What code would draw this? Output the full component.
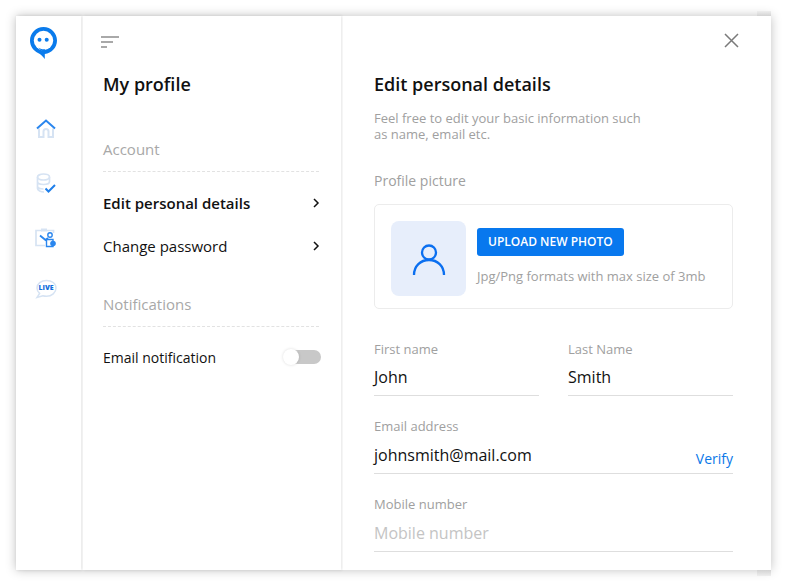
<script lang="ts">
</script>

<div class="page">
  <div class="card">
    <nav class="rail">
      <svg class="logo" width="28" height="32" viewBox="0 0 28 32">
        <path fill="#0a7bec" d="M13.500 0C6 0 0 6 0 13.500c0 5.500 3.300 10.300 8 12.400 2.600 1.200 5 3.500 6.800 6.100V27c6.800-.7 12.200-6.500 12.200-13.500C27 6 21 0 13.500 0z"/>
        <circle cx="13.500" cy="13.500" r="9.700" fill="#fff"/>
        <path d="M6 19c2.400 3.400 5.400 4.700 9 5v-3.500c-3.500.8-6.400 0-9-1.500z" fill="#fff"/>
        <path d="M8 20.500c2 1.400 4.500 2 7 1.700v2.300c-3-.2-5.200-1.600-7-4z" fill="#0a7bec"/>
        <circle cx="9.500" cy="12.800" r="2" fill="#0a7bec"/>
        <circle cx="16.700" cy="12.800" r="2" fill="#0a7bec"/>
      </svg>
      <div class="rail-icons">
        <svg width="20" height="19" viewBox="0 0 20 19" fill="none">
          <path d="M3 9.500V18H7.500V12.500a2.500 2.500 0 0 1 5 0V18H17V9.500" stroke="#d6e3f3" stroke-width="2"/>
          <path d="M1 9.500L10 1.500L19 9.500" stroke="#2a86ee" stroke-width="2"/>
        </svg>
        <svg width="20" height="20" viewBox="0 0 20 20" fill="none">
          <ellipse cx="7.500" cy="4" rx="6" ry="3" stroke="#d6e3f3" stroke-width="1.700"/>
          <path d="M1.500 4V15.500C1.500 17.500 5 19 8 19M1.500 8.500c0 2 3 3 6 3s6-1 6-3V4M1.500 13c0 2 3 3 6 3" stroke="#d6e3f3" stroke-width="1.700"/>
          <path d="M9.500 15.500L12.500 18.500L19 12" stroke="#1f7fea" stroke-width="2"/>
        </svg>
        <svg width="22" height="20" viewBox="0 0 22 20" fill="none">
          <path d="M12 2.500H18.500V5M7 2.500H1V17.500H10" stroke="#d6e3f3" stroke-width="1.700"/>
          <path d="M6 .5H12V3.500H6z" fill="#d6e3f3"/>
          <path d="M5 7.500L10.500 12L13 10" stroke="#2a86ee" stroke-width="1.800"/>
          <circle cx="15" cy="7" r="2.200" stroke="#2a86ee" stroke-width="1.400"/>
          <path d="M11.500 18.500V11.500H18V18.500z" stroke="#2a86ee" stroke-width="1.400"/>
          <circle cx="18" cy="15.500" r="2.800" fill="#2a86ee"/>
        </svg>
        <div class="live">
          <svg width="22" height="20" viewBox="0 0 22 20" fill="none">
            <path d="M11.500 1.500C6 1.500 2 4.800 2 9c0 2.200 1 4 2.600 5.400L2 18.500l5.800-1.800c1.100.3 2.400.5 3.700.5 5.300 0 9.500-3.600 9.500-8.200S16.800 1.500 11.500 1.500z" stroke="#d6e3f3" stroke-width="1.500"/>
          </svg>
          <span>LIVE</span>
        </div>
      </div>
    </nav>

    <aside class="panel">
      <svg class="menu" width="18" height="12" viewBox="0 0 18 12">
        <path d="M0 0h18v2H0zM0 5h12v2H0zM0 10h6v2H0z" fill="#a9a9a9"/>
      </svg>
      <h2>My profile</h2>
      <div class="group">Account</div>
      <div class="row strong">Edit personal details
        <svg width="8" height="12" viewBox="0 0 8 12" fill="none"><path d="M2 2l4 4-4 4" stroke="#111" stroke-width="1.500"/></svg>
      </div>
      <div class="row">Change password
        <svg width="8" height="12" viewBox="0 0 8 12" fill="none"><path d="M2 2l4 4-4 4" stroke="#111" stroke-width="1.500"/></svg>
      </div>
      <div class="group second">Notifications</div>
      <div class="row small">Email notification
        <span class="toggle"><span class="knob"></span></span>
      </div>
    </aside>

    <main class="main">
      <button class="close" aria-label="Close">
        <svg width="15" height="15" viewBox="0 0 15 15" fill="none"><path d="M1 1l13 13M14 1L1 14" stroke="#7a7a7a" stroke-width="1.500"/></svg>
      </button>
      <h2>Edit personal details</h2>
      <p class="intro">Feel free to edit your basic information such<br />as name, email etc.</p>
      <div class="section">Profile picture</div>
      <div class="upload">
        <div class="avatar">
          <svg width="34" height="34" viewBox="0 0 34 34" fill="none">
            <circle cx="17" cy="10.500" r="7" stroke="#0b6ff0" stroke-width="2.300"/>
            <path d="M2 33c0-9 6.500-15 15-15s15 6 15 15" stroke="#0b6ff0" stroke-width="2.300"/>
          </svg>
        </div>
        <div class="upload-text">
          <span class="btn">UPLOAD NEW PHOTO</span>
          <span class="hint">Jpg/Png formats with max size of 3mb</span>
        </div>
      </div>
      <div class="two">
        <div class="field"><label for="f1">First name</label><div id="f1" class="value">John</div></div>
        <div class="field"><label for="f2">Last Name</label><div id="f2" class="value">Smith</div></div>
      </div>
      <div class="field"><label for="f3">Email address</label>
        <div id="f3" class="value spread">johnsmith@mail.com <span class="verify">Verify</span></div>
      </div>
      <div class="field"><label for="f4">Mobile number</label><div id="f4" class="value ghost">Mobile number</div></div>
    </main>
  </div>
</div>

<style>
  :global(body) {
    margin: 0;
    background: #fff;
  }
  .page {
    padding: 16px 15px 15px 16px;
    width: 786px;
    height: 585px;
    box-sizing: border-box;
    overflow: hidden;
    font-family: "Open Sans", sans-serif;
    color: #111;
  }
  .card {
    position: relative;
    isolation: isolate;
    display: flex;
    height: 554px;
    width: 755px;
    background: #fff;
    box-shadow: 0 0 10px rgba(0, 0, 0, 0.25);
  }
  /* sheet peeking out behind the card, top right and bottom right */
  .card::before {
    content: "";
    position: absolute;
    z-index: -1;
    right: 0;
    top: -5px;
    bottom: -6px;
    width: 14px;
    background: linear-gradient(#eee, #d2d2d2 5px, #d2d2d2 calc(100% - 6px), #eee);
  }
  .rail,
  .panel,
  .main {
    background: #fff;
  }
  .rail {
    width: 65px;
    flex: none;
    display: flex;
    flex-direction: column;
    align-items: center;
    box-shadow: 1px 0 3px rgba(0, 0, 0, 0.11);
  }
  .logo {
    margin-top: 11px;
    margin-right: 9px;
  }
  .rail-icons {
    margin-top: 60px;
    margin-right: 6px;
    display: flex;
    flex-direction: column;
    align-items: center;
    gap: 35px;
  }
  .rail-icons > :nth-child(3) {
    margin-bottom: -4px;
  }
  .live {
    position: relative;
    width: 22px;
    height: 20px;
  }
  .live span {
    position: absolute;
    left: 4px;
    top: 4px;
    font-size: 7px;
    line-height: 9px;
    font-weight: 800;
    color: #1470dc;
  }
  .panel {
    width: 258px;
    margin-left: 2px;
    flex: none;
    box-sizing: border-box;
    padding: 20px 20px 0;
    box-shadow: 1px 0 3px rgba(0, 0, 0, 0.11);
  }
  .menu {
    display: block;
    margin-left: -2px;
  }
  h2 {
    margin: 0;
    font-size: 18px;
    line-height: 24px;
    font-weight: 600;
  }
  .panel h2 {
    margin-top: 24px;
  }
  .group {
    margin-top: 43px;
    margin-right: 2px;
    padding-bottom: 12px;
    font-size: 15px;
    line-height: 20px;
    color: #a8a8a8;
    border-bottom: 1px dashed #e2e2e2;
  }
  .group.second {
    margin-top: 38px;
  }
  .row {
    display: flex;
    justify-content: space-between;
    align-items: center;
    font-size: 15px;
    height: 20px;
    margin-top: 24px;
    padding-right: 1px;
  }
  .row.strong {
    margin-top: 21px;
    font-weight: 600;
  }
  .row.strong + .row {
    margin-top: 23px;
  }
  .row.small {
    font-size: 14px;
    margin-top: 20px;
    padding-right: 0;
  }
  .toggle {
    position: relative;
    width: 30px;
    height: 14px;
    border-radius: 7px;
    background: #c8c8c8;
  }
  .knob {
    position: absolute;
    left: -8px;
    top: -1px;
    width: 16px;
    height: 16px;
    border-radius: 50%;
    background: #fff;
    box-shadow: 0 0 3px rgba(0, 0, 0, 0.15);
  }
  .main {
    position: relative;
    margin-left: 2px;
    flex: 1;
    padding: 56px 38px 0 31px;
  }
  .close {
    position: absolute;
    top: 17px;
    right: 32px;
    padding: 0;
    border: 0;
    background: none;
    display: flex;
  }
  .intro {
    margin: 14px 0 0;
    font-size: 13px;
    line-height: 16px;
    color: #a0a0a0;
  }
  .section {
    margin-top: 29px;
    font-size: 14px;
    line-height: 20px;
    color: #a0a0a0;
  }
  .upload {
    margin-top: 13px;
    height: 105px;
    box-sizing: border-box;
    border: 1px solid #ececec;
    border-radius: 5px;
    padding: 16px;
    display: flex;
    gap: 11px;
  }
  .avatar {
    width: 75px;
    height: 75px;
    border-radius: 8px;
    background: #e7eefb;
    display: flex;
    align-items: center;
    justify-content: center;
  }
  .upload-text {
    display: flex;
    flex-direction: column;
    align-items: flex-start;
    padding-top: 7px;
  }
  .btn {
    background: #0878ee;
    color: #fff;
    font-size: 12px;
    font-weight: 600;
    line-height: 28px;
    padding: 0 11px;
    border-radius: 3px;
  }
  .hint {
    margin-top: 11px;
    font-size: 13px;
    line-height: 18px;
    color: #a0a0a0;
  }
  .two {
    margin-top: 31px;
    display: grid;
    grid-template-columns: 165px 165px;
    gap: 29px;
  }
  .field {
    margin-top: 21px;
  }
  .two .field {
    margin-top: 0;
  }
  label {
    display: block;
    font-size: 13px;
    line-height: 18px;
    color: #a0a0a0;
  }
  .value {
    margin-top: 7px;
    height: 31px;
    font-size: 16px;
    line-height: 27px;
    border-bottom: 1px solid #dedede;
  }
  .two .value {
    margin-top: 6px;
  }
  .spread {
    display: flex;
    justify-content: space-between;
  }
  .verify {
    font-size: 14px;
    line-height: 34px;
    color: #0a78e8;
  }
  .ghost {
    color: #c4c4c4;
  }
</style>
